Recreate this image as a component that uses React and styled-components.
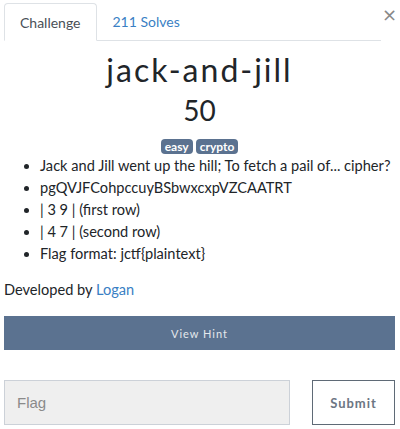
import React from 'react'
import styled, { createGlobalStyle } from 'styled-components';

const Global = createGlobalStyle`
  body {
    margin: 0;
    background: #fff;
    font-family: Lato, "Open Sans", sans-serif;
    color: #212529;
  }
`;

const Modal = styled.div`
  padding: 3px 5px 0 4px;
`;

const Header = styled.div`
  display: flex;
  align-items: flex-start;
`;

const Tabs = styled.div`
  display: flex;
  flex: 1;
  border-bottom: 1px solid #dee2e6;
  height: 37px;
`;

const Tab = styled.div`
  box-sizing: border-box;
  height: ${p => (p.$active ? '38px' : '37px')};
  padding: 0 15px;
  display: flex;
  align-items: center;
  font-size: 14px;
  color: ${p => (p.$active ? '#495057' : '#3a7fc4')};
  background: #fff;
  border: 1px solid ${p => (p.$active ? '#dee2e6' : 'transparent')};
  border-bottom-color: ${p => (p.$active ? '#fff' : 'transparent')};
  border-radius: 4px 4px 0 0;
`;

const Close = styled.div`
  width: 13px;
  margin-left: 1px;
  padding-top: 3px;
  font-size: 18px;
  line-height: 1;
  color: #888;
  text-align: center;
  font-family: "DejaVu Sans", sans-serif;
`;

const Title = styled.h2`
  margin: 11px 0 0;
  text-align: center;
  font-size: 32px;
  line-height: 36px;
  font-weight: 400;
  letter-spacing: 2px;
  color: #212529;
`;

const Value = styled.h3`
  margin: 6px 0 0;
  text-align: center;
  font-size: 28px;
  line-height: 32px;
  font-weight: 400;
`;

const Tags = styled.div`
  display: flex;
  justify-content: center;
  gap: 3px;
  margin-top: 13px;
`;

const Badge = styled.span`
  background: #5b7290;
  color: #fff;
  font-size: 12px;
  font-weight: 700;
  line-height: 15px;
  padding: 0 4px;
  border-radius: 4px;
`;

const Desc = styled.ul`
  margin: 1px 0 0;
  padding-left: 36px;
  font-size: 14.6px;
  line-height: 22px;
`;

const Author = styled.p`
  margin: 14px 0 0;
  font-size: 14.6px;
  line-height: 22px;

  & a {
    color: #3a7fc4;
    text-decoration: none;
  }
`;

const HintButton = styled.button`
  display: block;
  width: 100%;
  margin-top: 15px;
  height: 34px;
  border: none;
  background: #5b7290;
  color: #e4e8ec;
  font-family: Lato, sans-serif;
  font-size: 11px;
  letter-spacing: 1px;
`;

const SubmitRow = styled.div`
  display: flex;
  gap: 22px;
  margin-top: 30px;
`;

const FlagInput = styled.input`
  box-sizing: border-box;
  width: 286px;
  height: 45px;
  background: #efefef;
  border: 1px solid #ccd1d8;
  padding: 0 12px;
  font-family: "Liberation Sans", Arial, sans-serif;
  font-size: 15px;
  outline: none;

  &::placeholder {
    color: #8a8a8a;
  }
`;

const SubmitButton = styled.button`
  box-sizing: border-box;
  width: 83px;
  height: 45px;
  background: #fff;
  border: 1px solid #5f6a76;
  color: #6c7683;
  font-family: Lato, sans-serif;
  font-weight: 700;
  font-size: 13px;
  letter-spacing: 1px;
`;

function App() {
  return (
    <>
      <Global />
      <Modal>
        <Header>
          <Tabs>
            <Tab $active>Challenge</Tab>
            <Tab>211 Solves</Tab>
          </Tabs>
          <Close>×</Close>
        </Header>
        <Title>jack-and-jill</Title>
        <Value>50</Value>
        <Tags>
          <Badge>easy</Badge>
          <Badge>crypto</Badge>
        </Tags>
        <Desc>
          <li>Jack and Jill went up the hill; To fetch a pail of... cipher?</li>
          <li>pgQVJFCohpccuyBSbwxcxpVZCAATRT</li>
          <li>| 3 9 | (first row)</li>
          <li>| 4 7 | (second row)</li>
          <li>Flag format: jctf{'{'}plaintext{'}'}</li>
        </Desc>
        <Author>Developed by <a href="#">Logan</a></Author>
        <HintButton>View Hint</HintButton>
        <SubmitRow>
          <FlagInput placeholder="Flag" />
          <SubmitButton>Submit</SubmitButton>
        </SubmitRow>
      </Modal>
    </>
  )
}

export default App
